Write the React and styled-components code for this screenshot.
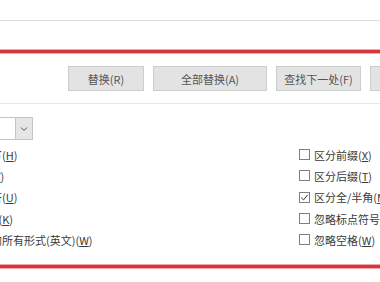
import styled, { createGlobalStyle } from "styled-components";

const GlobalStyle = createGlobalStyle`
  html, body {
    margin: 0;
    padding: 0;
    background: #ffffff;
  }
  body {
    font-family: "Noto Sans CJK SC", "Noto Sans", "Liberation Sans", sans-serif;
  }
`;

const Frame = styled.div`
  width: 380px;
  height: 282px;
  overflow: hidden;
  background: #ffffff;
  color: #3c3c3c;
  font-size: 11px;
`;

const TopField = styled.div`
  height: 20px;
  border-bottom: 1px solid #dddddd;
`;

const Highlight = styled.div`
  margin-top: 29px;
  height: 199px;
  border-top: 3px solid #d8363a;
  border-bottom: 3px solid #d8363a;
  box-shadow: 0 -1px 0 #f0a9ab, 0 1px 0 #f0a9ab, inset 0 1px 0 #f0a9ab, inset 0 -1px 0 #f0a9ab;
  padding-top: 13px;
  box-sizing: content-box;
`;

const ButtonRow = styled.div`
  display: flex;
  gap: 9px;
  padding-left: 68px;
  height: 25px;
`;

const Button = styled.div`
  flex: 0 0 ${(p) => p.$w}px;
  height: 25px;
  box-sizing: border-box;
  display: flex;
  align-items: center;
  justify-content: center;
  background: #e3e3e3;
  border: 1px solid #cdcdcd;
  color: #555555;
  font-size: 11px;
  white-space: nowrap;
`;

const Divider = styled.div`
  margin-top: 12px;
  height: 1px;
  background: #e6e6e6;
`;

const DropRow = styled.div`
  margin-top: 13px;
  margin-left: -40px;
  display: flex;
  height: 23px;
`;

const DropBox = styled.div`
  width: 56px;
  box-sizing: border-box;
  border: 1px solid #c4c4c4;
  background: #ffffff;
`;

const DropArrow = styled.div`
  width: 17px;
  box-sizing: border-box;
  border: 1px solid #c4c4c4;
  border-left: none;
  background: #e6e6e6;
  display: flex;
  align-items: center;
  justify-content: center;
`;

const Options = styled.div`
  margin-top: 4px;
  margin-left: -68px;
  display: grid;
  grid-template-columns: 367px 1fr;
  grid-auto-flow: column;
  grid-template-rows: repeat(5, 21.3px);
`;

const Option = styled.div`
  display: flex;
  align-items: center;
  gap: 4px;
  white-space: nowrap;
  color: #3a3a3a;
`;

const Box = styled.span`
  flex: 0 0 11px;
  width: 11px;
  height: 11px;
  box-sizing: border-box;
  border: 1px solid #7f7f7f;
  background: #ffffff;
  display: flex;
  align-items: center;
  justify-content: center;
`;

const Key = styled.u`
  text-underline-offset: 1px;
`;

function Check({ checked }) {
  return (
    <Box>
      {checked && (
        <svg width="9" height="9" viewBox="0 0 9 9">
          <path d="M1.2 4.6 L3.5 6.9 L7.8 1.8" fill="none" stroke="#333" strokeWidth="1" />
        </svg>
      )}
    </Box>
  );
}

const leftOptions = [
  ["区分大小写", "H"],
  ["全字匹配", "Y"],
  ["使用通配符", "U"],
  ["同音(英文)", "K"],
  ["查找单词的所有形式(英文)", "W"],
];

const rightOptions = [
  ["区分前缀", "X", false],
  ["区分后缀", "T", false],
  ["区分全/半角", "M", true],
  ["忽略标点符号", "S", false],
  ["忽略空格", "W", false],
];

export default function App() {
  return (
    <>
      <GlobalStyle />
      <Frame>
        <TopField />
        <Highlight>
          <ButtonRow>
            <Button $w={76}>替换(R)</Button>
            <Button $w={114}>全部替换(A)</Button>
            <Button $w={85}>查找下一处(F)</Button>
            <Button $w={84}>关闭</Button>
          </ButtonRow>
          <Divider />
          <DropRow>
            <DropBox />
            <DropArrow>
              <svg width="8" height="6" viewBox="0 0 8 6">
                <path d="M1 1.5 L4 4.5 L7 1.5" fill="none" stroke="#555" strokeWidth="1" />
              </svg>
            </DropArrow>
          </DropRow>
          <Options>
            {leftOptions.map(([label, key]) => (
              <Option key={label}>
                <Check />
                <span>
                  {label}(<Key>{key}</Key>)
                </span>
              </Option>
            ))}
            {rightOptions.map(([label, key, checked]) => (
              <Option key={label}>
                <Check checked={checked} />
                <span>
                  {label}(<Key>{key}</Key>)
                </span>
              </Option>
            ))}
          </Options>
        </Highlight>
      </Frame>
    </>
  );
}
